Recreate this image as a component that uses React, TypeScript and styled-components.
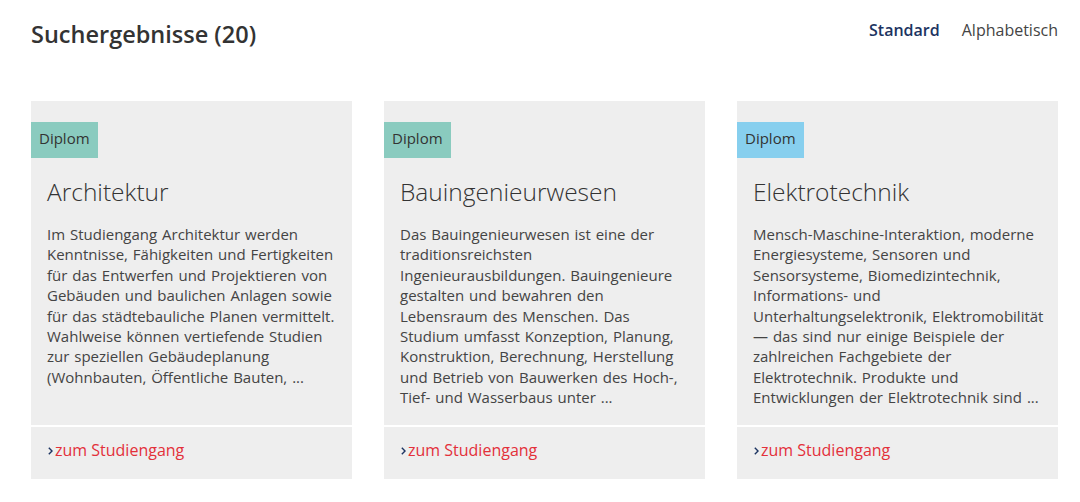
import React from "react";
import styled, { createGlobalStyle } from "styled-components";

const Global = createGlobalStyle`
  html, body { margin: 0; padding: 0; background: #fff; }
  body { font-family: "Open Sans", "Noto Sans", sans-serif; color: #333; }
  * { box-sizing: border-box; }
`;

const Page = styled.div`
  padding: 17px 22px 0 31px;
`;

const Header = styled.div`
  display: flex;
  justify-content: space-between;
  align-items: flex-start;
`;

const Title = styled.h1`
  margin: 0;
  font-size: 23.5px;
  font-weight: 600;
  line-height: 34px;
  color: #333;
`;

const Sort = styled.div`
  display: flex;
  gap: 22px;
  padding-top: 1px;
`;

const SortOption = styled.a<{ $active?: boolean }>`
  font-size: 16px;
  line-height: 24px;
  font-weight: ${(p) => (p.$active ? 600 : 400)};
  color: ${(p) => (p.$active ? "#1c3461" : "#444")};
  text-decoration: none;
  cursor: pointer;
`;

const Grid = styled.div`
  display: grid;
  grid-template-columns: repeat(3, 1fr);
  gap: 32px;
  margin-top: 50px;
`;

const Card = styled.div`
  background: #eeeeee;
  display: flex;
  flex-direction: column;
  padding-top: 21px;
  height: 378px;
`;

const Badge = styled.span<{ $color: string }>`
  align-self: flex-start;
  background: ${(p) => p.$color};
  color: #333;
  font-size: 15px;
  line-height: 32px;
  height: 36px;
  padding: 0 8px;
`;

const CardTitle = styled.h2`
  margin: 16px 15px 0 16px;
  font-size: 24.5px;
  font-weight: 300;
  line-height: 35px;
  color: #333;
`;

const Body = styled.p`
  margin: 15px 13.5px 0 16px;
  flex: 1;
  font-size: 15px;
  line-height: 20.4px;
  word-spacing: 1px;
  color: #444;
`;

const Footer = styled.div`
  border-top: 2px solid #fff;
  height: 54px;
  display: flex;
  align-items: flex-start;
  padding: 12px 16px 0;
`;

const Link = styled.a`
  display: flex;
  align-items: center;
  color: #e3303a;
  font-size: 16px;
  line-height: 22px;
  text-decoration: none;
  cursor: pointer;
`;

const Chevron = styled.svg`
  width: 7px;
  height: 10px;
  margin-right: 1px;
  margin-top: 1px;
`;

const cards = [
  {
    title: "Architektur",
    color: "#8acbbf",
    text: "Im Studiengang Architektur werden Kenntnisse, Fähigkeiten und Fertigkeiten für das Entwerfen und Projektieren von Gebäuden und baulichen Anlagen sowie für das städtebauliche Planen vermittelt. Wahlweise können vertiefende Studien zur speziellen Gebäudeplanung (Wohnbauten, Öffentliche Bauten, ...",
  },
  {
    title: "Bauingenieurwesen",
    color: "#8acbbf",
    text: "Das Bauingenieurwesen ist eine der traditionsreichsten Ingenieurausbildungen. Bauingenieure gestalten und bewahren den Lebensraum des Menschen. Das Studium umfasst Konzeption, Planung, Konstruktion, Berechnung, Herstellung und Betrieb von Bauwerken des Hoch-, Tief- und Wasserbaus unter ...",
  },
  {
    title: "Elektrotechnik",
    color: "#87cfee",
    text: "Mensch-Maschine-Interaktion, moderne Energiesysteme, Sensoren und Sensorsysteme, Biomedizintechnik, Informations- und Unterhaltungselektronik, Elektromobilität — das sind nur einige Beispiele der zahlreichen Fachgebiete der Elektrotechnik. Produkte und Entwicklungen der Elektrotechnik sind ...",
  },
];

export default function App() {
  return (
    <>
      <Global />
      <Page>
        <Header>
          <Title>Suchergebnisse (20)</Title>
          <Sort>
            <SortOption $active>Standard</SortOption>
            <SortOption>Alphabetisch</SortOption>
          </Sort>
        </Header>
        <Grid>
          {cards.map((c) => (
            <Card key={c.title}>
              <Badge $color={c.color}>Diplom</Badge>
              <CardTitle>{c.title}</CardTitle>
              <Body>{c.text}</Body>
              <Footer>
                <Link>
                  <Chevron viewBox="0 0 7 10">
                    <path d="M1.8 1.8 L5 5 L1.8 8.2" fill="none" stroke="#1c3461" strokeWidth="1.4" />
                  </Chevron>
                  zum Studiengang
                </Link>
              </Footer>
            </Card>
          ))}
        </Grid>
      </Page>
    </>
  );
}
